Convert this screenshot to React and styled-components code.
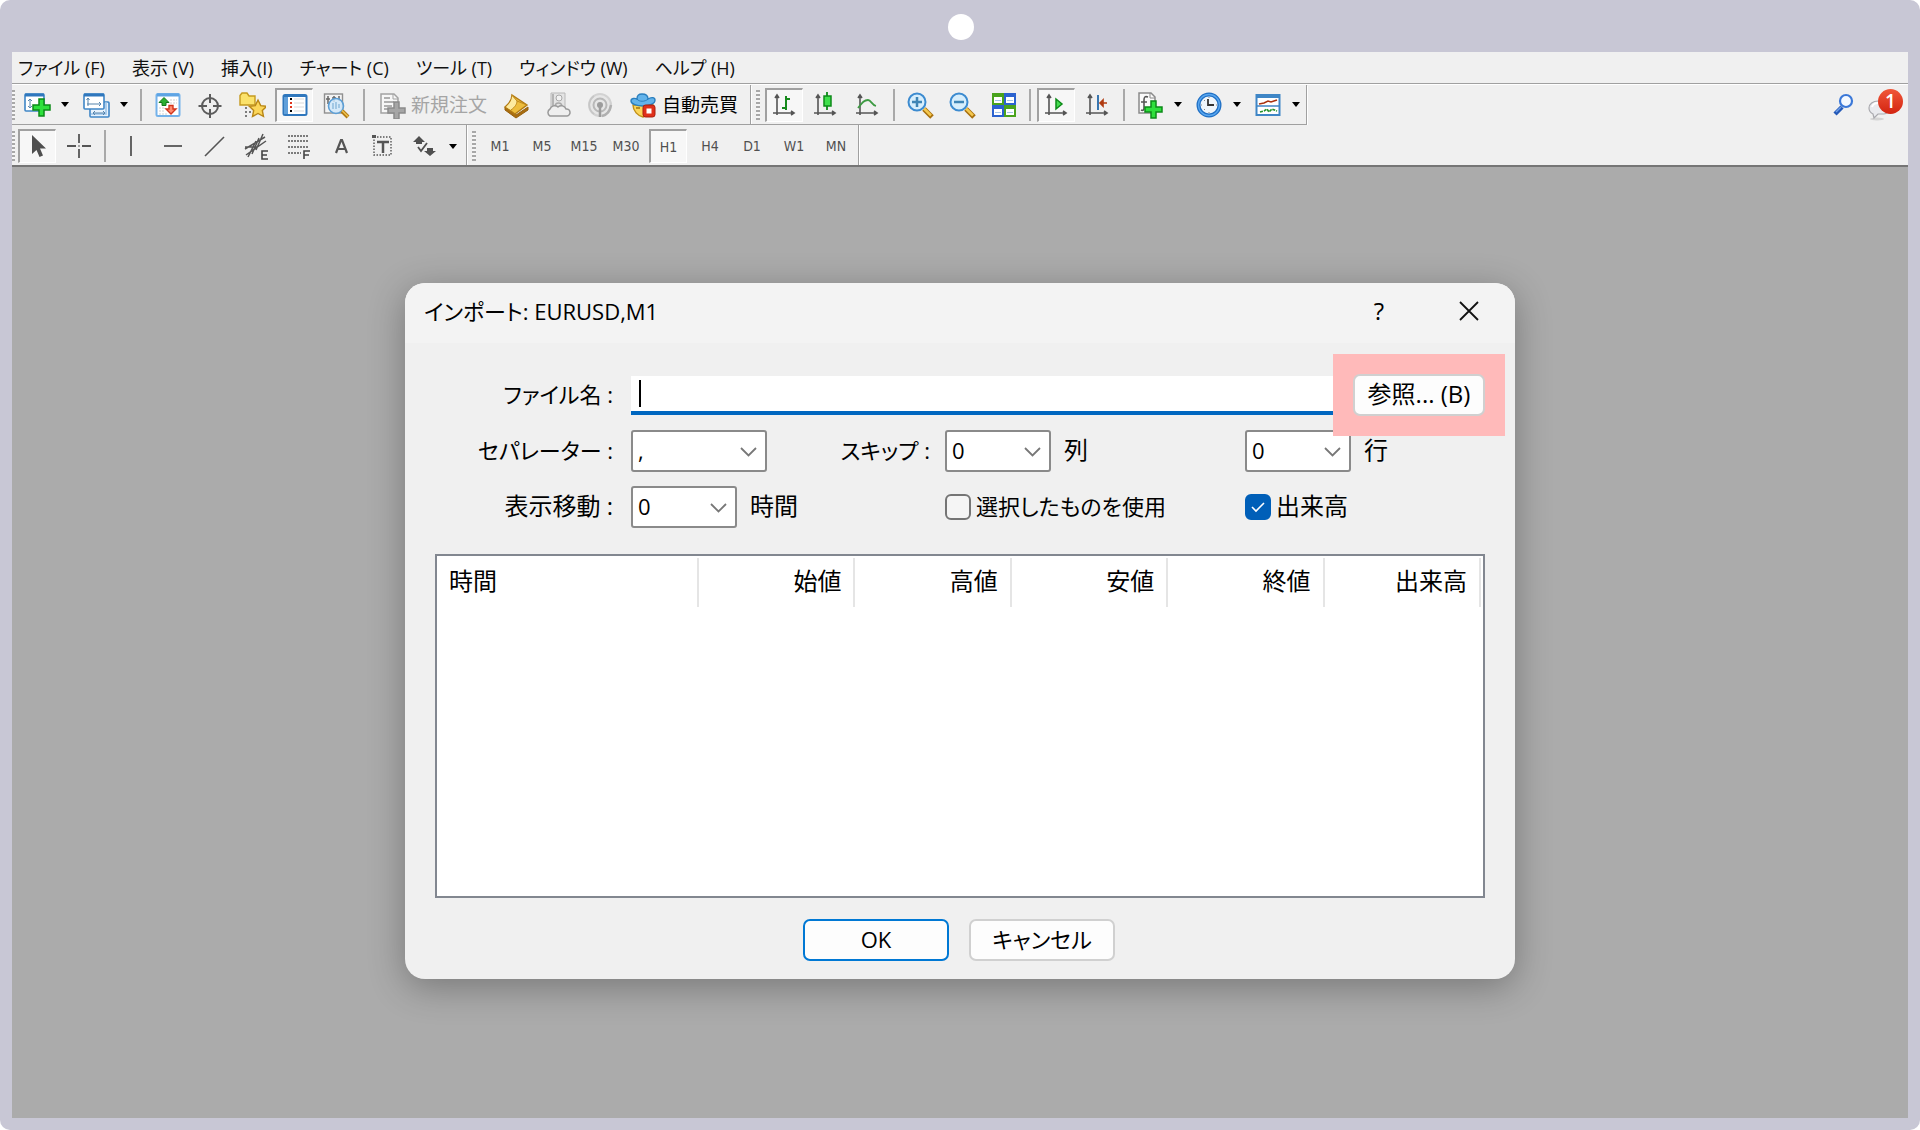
import React from 'react';
import styled, { createGlobalStyle, css } from 'styled-components';

const GlobalStyle = createGlobalStyle`
  * {
    box-sizing: border-box;
  }

  body {
    margin: 0;
    background: #fff;
    color: #000;
    font-family: 'Open Sans', 'Noto Sans CJK JP', sans-serif;
    font-feature-settings: 'palt';
  }

  button, input, select {
    font: inherit;
    font-feature-settings: inherit;
    color: inherit;
  }
`;

const Frame = styled.div`
  display: flex;
  flex-direction: column;
  min-height: 100vh;
  padding: 0 12px 12px;
  background: #c8c7d5;
  border-radius: 10px;
`;

const FrameTop = styled.div`
  display: flex;
  align-items: center;
  justify-content: center;
  height: 52px;
  padding: 2px 0 0 2px;
`;

const Camera = styled.span`
  width: 26px;
  height: 26px;
  border-radius: 50%;
  background: #fff;
`;

const MenuBar = styled.nav`
  display: flex;
  align-items: center;
  gap: 27px;
  height: 32px;
  padding-left: 6px;
  background: #f0f0f0;
  border-bottom: 1px solid #a0a0a0;
`;

const MenuItem = styled.button`
  padding: 0;
  border: none;
  background: none;
  font-size: 18px;
  line-height: 28px;
  color: #111;
  white-space: nowrap;
`;

const Toolbar = styled.div`
  display: flex;
  background: #f0f0f0;
  border-top: 1px solid #fff;
  height: 41px;
`;

const LowerToolbar = styled(Toolbar)`
  height: 42px;
  border-top: none;
  border-bottom: 2px solid #757575;
`;

const Group = styled.div`
  display: flex;
  align-items: center;
  padding-right: ${({ $end }) => $end || 0}px;
  border-right: 1px solid #a0a0a0;
  border-bottom: 1px solid #a0a0a0;
  box-shadow: 1px 1px 0 #fff;

  ${LowerToolbar} & {
    padding-top: 2px;
    border-bottom: none;
    box-shadow: 1px 0 0 #fff;
  }
`;

const Grip = styled.span`
  width: ${({ $edge }) => ($edge ? 3 : 4)}px;
  height: 30px;
  margin: ${({ $edge }) => ($edge ? '0 1px 0 0' : '0 3px 0 5px')};
  background: repeating-linear-gradient(#a8a8a8 0 2px, #f6f6f6 2px 4px);
`;

const Separator = styled.span`
  width: 2px;
  height: 32px;
  margin: 0 ${({ $wide }) => ($wide ? '5px 0 6px' : '4px')};
  background: #a9a9a9;
`;

const ToolButton = styled.button`
  display: flex;
  align-items: center;
  justify-content: center;
  gap: 5px;
  min-width: 38px;
  height: 34px;
  margin: 0 2px;
  padding: 0 ${({ $labelled }) => ($labelled ? 5 : 0)}px;
  border: 1px solid transparent;
  background: none;
  font-size: 19px;
  line-height: 28px;
  white-space: nowrap;
  color: ${({ disabled }) => (disabled ? '#a5a5a5' : '#000')};

  ${({ $pressed }) =>
    $pressed &&
    css`
      border-width: 2px 1px 1px 2px;
      border-color: #a0a0a0 #fff #fff #a0a0a0;
      background: #f7f7f7;
    `}
`;

const DropButton = styled.button`
  display: flex;
  align-items: center;
  width: 17px;
  height: 34px;
  padding: 0 0 0 3px;
  border: none;
  background: none;
`;

const PeriodButton = styled(ToolButton)`
  font-family: 'DejaVu Sans Condensed', 'DejaVu Sans', sans-serif;
  font-size: 14px;
  color: #505050;
`;

const Tray = styled.div`
  display: flex;
  align-items: center;
  gap: 10px;
  margin-left: auto;
  padding-right: 5px;
`;

const TrayButton = styled.button`
  display: flex;
  padding: 0;
  border: none;
  background: none;
`;

const Alert = styled.span`
  position: relative;
  display: flex;
`;

const AlertCount = styled.span`
  position: absolute;
  top: 0;
  right: 0;
  width: 25px;
  height: 25px;
  border-radius: 50%;
  background: linear-gradient(#f0573a, #d32410);
  color: #fff;
  font-size: 19px;
  font-weight: 600;
  line-height: 25px;
  text-align: center;
`;

const Workspace = styled.main`
  flex: 1;
  padding: 116px 20px 20px;
  background: #ababab;
`;

const Dialog = styled.section`
  max-width: 1110px;
  margin: 0 auto;
  border-radius: 20px;
  background: #f0f0f0;
  box-shadow: 0 8px 36px rgba(0, 0, 0, 0.3);
  overflow: hidden;
`;

const DialogHeader = styled.header`
  display: flex;
  align-items: center;
  height: 60px;
  padding: 0 1px 4px 19px;
  background: #f3f3f3;
`;

const DialogTitle = styled.h1`
  flex: 1;
  margin: 0;
  font-size: 22px;
  font-weight: 400;
  line-height: 32px;
`;

const HeaderButton = styled.button`
  display: flex;
  align-items: center;
  justify-content: center;
  width: 90px;
  padding: 0;
  border: none;
  background: none;
  font-size: 24px;
  line-height: 32px;
`;

const DialogBody = styled.form`
  padding: 31px 30px 18px;
  font-size: 24px;
  line-height: 36px;
`;

const Fields = styled.div`
  display: grid;
  grid-template-columns: 196px 314px 300px 1fr;
  row-gap: 14px;
  align-items: center;
`;

const FieldLabel = styled.label`
  padding: 0 18px 2px 0;
  font-size: ${({ $kana }) => ($kana ? 22 : 24)}px;
  text-align: right;
  white-space: nowrap;
`;

const FileField = styled.div`
  display: flex;
  grid-column: 2 / -1;
  align-items: center;
  gap: 18px;
`;

const FileBox = styled.div`
  position: relative;
  display: flex;
  flex: 1;
`;

const FileInput = styled.input`
  width: 100%;
  height: 39px;
  padding: 0 10px;
  border: none;
  border-bottom: 4px solid #0067c0;
  background: #fff;
  outline: none;
`;

const Caret = styled.span`
  position: absolute;
  top: 4px;
  left: 8px;
  width: 2px;
  height: 27px;
  background: #000;
`;

const Highlight = styled.div`
  position: relative;
  z-index: 1;

  &::before {
    content: '';
    position: absolute;
    inset: -20px;
    background: #ffbaba;
  }
`;

const PushButton = styled.button`
  position: relative;
  width: ${({ $wide }) => ($wide ? 146 : 132)}px;
  height: 42px;
  padding: 0 0 2px;
  border: 2px solid ${({ $primary }) => ($primary ? '#0078d4' : '#d0d0d0')};
  border-radius: 7px;
  background: #fdfdfd;
  font-size: ${({ $wide }) => ($wide ? 22 : 24)}px;
  line-height: 36px;
  white-space: nowrap;
`;

const Cell = styled.div`
  display: flex;
  align-items: center;
  gap: 13px;
  white-space: nowrap;
`;

const Unit = styled.span`
  padding-bottom: 2px;
`;

const SkipLabel = styled.label`
  margin-left: auto;
  padding: 0 15px 2px 0;
  font-size: 22px;
`;

const SelectBox = styled.span`
  position: relative;
  display: flex;
  width: ${({ $wide }) => ($wide ? 136 : 106)}px;

  svg {
    position: absolute;
    top: 17px;
    right: 10px;
    pointer-events: none;
  }
`;

const Select = styled.select`
  appearance: none;
  width: 100%;
  height: 42px;
  padding: 0 30px 2px 5px;
  border: 2px solid #8a8a8a;
  border-radius: 3px;
  background: #fff;
  font-size: 22px;
`;

const CheckLabel = styled.label`
  display: flex;
  align-items: center;
  gap: 5px;
  font-size: ${({ $kana }) => ($kana ? 22 : 24)}px;
  white-space: nowrap;
`;

const Checkbox = styled.input`
  appearance: none;
  width: 26px;
  height: 26px;
  margin: 0;
  border: 2px solid #757575;
  border-radius: 6px;
  background: #f5f5f5;

  &:checked {
    border-color: #005fb8;
    background: #005fb8;
  }
`;

const CheckWrap = styled.span`
  position: relative;
  display: flex;

  svg {
    position: absolute;
    inset: 0;
    pointer-events: none;
  }
`;

const TableBox = styled.div`
  min-height: 344px;
  margin-top: 26px;
  padding: 2px 2px 0 0;
  border: 2px solid #828790;
  background: #fff;
`;

const Table = styled.table`
  width: 100%;
  border-collapse: collapse;
  table-layout: fixed;
`;

const HeadCell = styled.th`
  width: ${({ $first }) => ($first ? '261px' : 'auto')};
  height: 49px;
  padding: 0 12px 4px;
  border-right: 2px solid #e5e5e5;
  font-weight: 400;
  text-align: ${({ $first }) => ($first ? 'left' : 'right')};
`;

const Actions = styled.div`
  display: flex;
  justify-content: center;
  gap: 20px;
  margin: 21px 2px 0 0;
`;

const Icon = ({ children, size = 28 }) => (
  <svg width={size} height={size} viewBox="0 0 28 28" fill="none" aria-hidden="true">
    {children}
  </svg>
);

const DownArrow = () => (
  <svg width="8" height="5" viewBox="0 0 8 5" aria-hidden="true">
    <path d="M0 0h8L4 5z" fill="#000" />
  </svg>
);

const GreenPlus = ({ x = 0, y = 0, fill = '#2ee03c', stroke = '#0c8a18' }) => (
  <path
    transform={`translate(${x} ${y})`}
    d="M6 0h5v6h6v5h-6v6h-5v-6h-6v-5h6z"
    fill={fill}
    stroke={stroke}
    strokeWidth="1.5"
  />
);

const Axes = () => (
  <g stroke="#555" strokeWidth="1.6">
    <path d="M6 4v20M2 22h21" />
    <path d="M4 7 6 4l2 3M20 20l3 2-3 2" fill="#555" />
  </g>
);

const NewChartIcon = () => (
  <Icon>
    <rect x="2" y="3" width="19" height="17" rx="1" fill="#fff" stroke="#3f86c6" strokeWidth="1.6" />
    <path d="M2 4h19" stroke="#2f77bd" strokeWidth="3" />
    <path d="M7 8v9M5 10l2-2 2 2M5 15l2 2 2-2M10 15h4" stroke="#5583ab" />
    <GreenPlus x={10} y={8} />
  </Icon>
);

const ProfilesIcon = () => (
  <Icon>
    <rect x="8" y="11" width="19" height="15" rx="1" fill="#e8f3fd" stroke="#3f86c6" strokeWidth="1.6" />
    <path d="M24 11v12H9" stroke="#9cc4e8" strokeWidth="1.6" />
    <path d="M11 22h12M13 20l-2 2 2 2M21 20l2 2-2 2" stroke="#5583ab" />
    <rect x="2" y="3" width="20" height="15" rx="1" fill="#fff" stroke="#3f86c6" strokeWidth="1.6" />
    <path d="M2 4h20" stroke="#2f77bd" strokeWidth="3" />
    <path d="M6 7v8M4.5 9 6 7l1.5 2M5 13h14M17 11l2 2-2 2" stroke="#5583ab" />
  </Icon>
);

const MarketWatchIcon = () => (
  <Icon>
    <rect x="2.5" y="3" width="23" height="22" rx="1.5" fill="#fff" stroke="#74b2ea" strokeWidth="2" />
    <path d="M3 4h22" stroke="#5ea4e4" strokeWidth="3" />
    <path d="M16 9h7M16 12h7M5 17h6M5 20h6M5 23h8" stroke="#cfcfcf" strokeDasharray="2 1" />
    <path d="m10 6.500 5 5h-3v3H8v-3H5z" fill="#2cae32" stroke="#14781b" />
    <path d="m17 23-5-5h3v-3.500h4V18h3z" fill="#ff8a70" stroke="#d2351c" strokeWidth="1.4" />
  </Icon>
);

const CrosshairCircleIcon = () => (
  <Icon>
    <circle cx="14" cy="15" r="8" stroke="#5c5c5c" strokeWidth="2" />
    <path d="M14 3v9M14 18v9M2.500 15H11M17 15h8.500" stroke="#5c5c5c" strokeWidth="2" />
  </Icon>
);

const FolderStarIcon = () => (
  <Icon>
    <path d="M2 4.500 4 2h5l2 3h6v9H2z" fill="#fbe26b" stroke="#c59a1f" strokeWidth="1.4" />
    <path d="M8 16v11M11 21h3" stroke="#555" strokeWidth="1.5" strokeDasharray="2 2" />
    <path
      d="m20 9 2.700 5.600 6 .7-4.400 4.200 1.200 6L20 22.500l-5.500 3 1.200-6-4.400-4.200 6-.7z"
      fill="#fbd65a"
      stroke="#b98716"
      strokeWidth="1.4"
    />
  </Icon>
);

const NavigatorIcon = () => (
  <Icon>
    <rect x="2.5" y="4" width="23" height="20" rx="1.5" fill="#fff" stroke="#2f77bd" strokeWidth="2" />
    <path d="M5 5v18" stroke="#5f9fda" strokeWidth="4" />
    <path d="M3 5h22" stroke="#2f77bd" strokeWidth="2" />
    <path d="M10 7v2M10 19v2" stroke="#000" strokeWidth="2" />
    <path d="M10 11v2M10 15v2" stroke="#e0331c" strokeWidth="2" />
    <path d="M13 8h10M13 12h10M13 16h10M13 20h10" stroke="#d9d9d9" />
  </Icon>
);

const TesterIcon = () => (
  <Icon>
    <rect x="2.5" y="3" width="18" height="19" fill="#f3f3f3" stroke="#8f8f8f" strokeWidth="1.4" />
    <path d="M6 5v8M4 8h4M12 5v6M10 7h4M17 5v5" stroke="#666" strokeWidth="1.5" />
    <circle cx="14" cy="15" r="7.5" fill="#cfe6f9" fillOpacity="0.85" stroke="#5c9fd6" strokeWidth="1.6" />
    <path d="M11 12v6M14 11v7M17 13v4" stroke="#8cb8dc" strokeWidth="1.4" />
    <path d="m20 20 6 6" stroke="#b17a12" strokeWidth="4" />
    <path d="m20 19.500 6 6" stroke="#f0c350" strokeWidth="1.5" />
  </Icon>
);

const NewOrderIcon = () => (
  <Icon>
    <path d="M3 3h13l4 4v15H3z" fill="#f7f7f7" stroke="#a3a3a3" strokeWidth="1.5" />
    <path d="M6 7h6M6 11h10M6 15h8M6 18h6" stroke="#999" strokeWidth="1.5" />
    <path d="M15 3v5h5" stroke="#a3a3a3" />
    <GreenPlus x={10} y={11} fill="#a6a6a6" stroke="#8b8b8b" />
  </Icon>
);

const BookIcon = () => (
  <Icon>
    <path d="m3 16 11 8 12-8v3L14 27 3 19z" fill="#a96d10" stroke="#96600d" />
    <path d="m3 16 10 7 12-9L10 4c0 5-3 9-7 12z" fill="#edbd3d" stroke="#b17a12" strokeWidth="1.4" />
    <path d="M10 5c0 5-3 8-6 11l5 3c4-3 6-6 6-9z" fill="#fdeaa0" />
    <path d="m10 4 5 6 10 4M15 10c0 3-2 6-6 9" stroke="#c08a1c" />
  </Icon>
);

const CloudServerIcon = () => (
  <Icon>
    <path d="M7 2h14v15H7z" fill="#e4e4e4" stroke="#b8b8b8" />
    <path d="M9 3v13M12 8h6M11 16c0-3 1-4 3.500-4s3.500 1 3.500 4" stroke="#a8a8a8" strokeWidth="1.6" />
    <circle cx="15" cy="7" r="3" fill="#f2f2f2" stroke="#a8a8a8" />
    <path
      d="M6 25a4 4 0 0 1 0-7 5 5 0 0 1 8-2 5 5 0 0 1 8 2 3.500 3.500 0 0 1 1 7z"
      fill="#efefef"
      stroke="#999"
      strokeWidth="1.5"
    />
  </Icon>
);

const SignalIcon = () => (
  <Icon>
    <circle cx="14" cy="14" r="11" fill="#e6e6e6" stroke="#d2d2d2" strokeWidth="2" />
    <path d="M8 23a11 11 0 0 1 0-18" stroke="#c6c6c6" strokeWidth="1.6" />
    <circle cx="14" cy="14" r="6.5" stroke="#b8b8b8" strokeWidth="2" />
    <circle cx="14" cy="14" r="3" fill="#9c9c9c" />
    <path d="M14 15v11" stroke="#9c9c9c" strokeWidth="2.5" />
    <path d="M16 25c5-1 8-5 9-11" stroke="#b0b0b0" strokeWidth="2.5" />
  </Icon>
);

const AutoTradeIcon = () => (
  <Icon>
    <path d="M4 14c0 6 5 11 10 12 5-1 10-6 10-12z" fill="#fbd65a" stroke="#c18f17" strokeWidth="1.4" />
    <path d="M7 17h4M15 17h4" stroke="#a3760f" strokeWidth="1.5" />
    <path
      d="M2 10c0-3 4-3 6-2 0-4 2-5 5-5 4 0 6 1 6 5 3-2 7-2 7 1 0 4-6 6-12 6S2 13 2 10z"
      fill="#63b3ea"
      stroke="#2b7fbe"
      strokeWidth="1.4"
    />
    <path d="M8 8c2 3 8 3 11 0" stroke="#2b7fbe" />
    <rect x="14" y="14" width="12" height="12" rx="2.5" fill="#e0301a" stroke="#a91e0d" />
    <rect x="17.5" y="17.5" width="5" height="5" fill="#fff" />
  </Icon>
);

const BarChartIcon = () => (
  <Icon>
    <Axes />
    <path d="M15 5v14M11 17h4M15 8h4" stroke="#178a1d" strokeWidth="2" />
  </Icon>
);

const CandleIcon = () => (
  <Icon>
    <Axes />
    <path d="M15 1v18" stroke="#0c8a18" strokeWidth="1.8" />
    <rect x="12" y="5" width="7" height="10" fill="#3fe04b" stroke="#0c8a18" strokeWidth="1.5" />
  </Icon>
);

const LineChartIcon = () => (
  <Icon>
    <Axes />
    <path d="M4 17c4-5 6-8 10-8 3 0 4 5 8 6" stroke="#3d9a42" strokeWidth="1.8" />
  </Icon>
);

const ZoomIcon = ({ plus }) => (
  <Icon>
    <path d="m18 18 8 8" stroke="#a86f0d" strokeWidth="5" />
    <path d="m18 17.500 7 7" stroke="#f4c84f" strokeWidth="2.5" />
    <circle cx="11" cy="11" r="8.5" fill="#d7eefc" stroke="#3c8bd0" strokeWidth="2" />
    <path d={plus ? 'M6 11h10M11 6v10' : 'M6 11h10'} stroke="#3f85b5" strokeWidth="2.5" />
  </Icon>
);

const TileIcon = () => (
  <Icon>
    <rect x="2" y="2" width="12" height="12" fill="#4aa31c" />
    <rect x="14" y="2" width="12" height="12" fill="#2b62cf" />
    <rect x="2" y="14" width="12" height="12" fill="#2b62cf" />
    <rect x="14" y="14" width="12" height="12" fill="#4aa31c" />
    <path d="M4 6h8v6H4zM16 6h8v6h-8zM4 18h8v6H4zM16 18h8v6h-8z" fill="#fff" />
    <path d="M5 9.500h6M5 21.500h6M17 9.500h6M17 21.500h6" stroke="#a6c6e8" />
  </Icon>
);

const AutoScrollIcon = () => (
  <Icon>
    <Axes />
    <path d="M13 8v10l6-5z" fill="#45dd50" stroke="#0c8a18" strokeWidth="1.5" />
  </Icon>
);

const ChartShiftIcon = () => (
  <Icon>
    <Axes />
    <path d="M14 4v15" stroke="#2368a8" strokeWidth="1.8" />
    <path d="M23 12h-6M19 9l-3 3 3 3z" fill="#c2410c" stroke="#b03a10" strokeWidth="1.6" />
  </Icon>
);

const IndicatorIcon = () => (
  <Icon>
    <path d="M3 2h12l4 4v16H3z" fill="#fafafa" stroke="#8a8a8a" strokeWidth="1.5" />
    <path d="M14 2v5h5" stroke="#8a8a8a" />
    <path d="M12 6c-3-1-4 0-4 3v8c0 2-1 3-3 2M5 11h6" stroke="#555" strokeWidth="1.6" />
    <GreenPlus x={9} y={10} />
  </Icon>
);

const ClockIcon = () => (
  <Icon>
    <circle cx="14" cy="14" r="10.5" fill="#eef5fb" stroke="#1f6fc4" strokeWidth="4" />
    <circle cx="14" cy="14" r="10.5" stroke="#58a6ef" strokeWidth="1.4" />
    <path d="M13 8v6h6" stroke="#333" strokeWidth="1.8" />
    <path d="M14 6v1M14 21v1M6 14h1M21 14h1M9 9l1 1M9 19l1-1" stroke="#888" />
  </Icon>
);

const TemplateIcon = () => (
  <Icon>
    <rect x="2.5" y="4" width="23" height="20" fill="#fff" stroke="#3f86c6" strokeWidth="2" />
    <path d="M2 5h24" stroke="#3f86c6" strokeWidth="4" />
    <path d="M3 15h22" stroke="#3f86c6" strokeWidth="1.5" />
    <path d="m5 13 5-1 4-2 3 1 6-2" stroke="#a8320f" strokeWidth="1.6" />
    <path d="m6 21 4-1 3-2 2 3 3-3 5 2" stroke="#23922a" strokeWidth="1.6" strokeDasharray="3 1" />
  </Icon>
);

const CursorIcon = () => (
  <Icon>
    <path d="M8 2v19l4.500-4 3 7 3.500-1.500-3-7h6z" fill="#4f4f4f" />
  </Icon>
);

const CrossIcon = () => (
  <Icon>
    <path d="M14 2v9M14 17v9M2 14h9M17 14h9M13.500 14h1" stroke="#555" strokeWidth="1.8" />
  </Icon>
);

const VLineIcon = () => (
  <Icon>
    <path d="M14 4v20" stroke="#555" strokeWidth="1.8" />
  </Icon>
);

const HLineIcon = () => (
  <Icon>
    <path d="M5 14h18" stroke="#555" strokeWidth="1.8" />
  </Icon>
);

const TrendIcon = () => (
  <Icon>
    <path d="M4 24 23 5" stroke="#555" strokeWidth="1.6" />
  </Icon>
);

const ChannelIcon = () => (
  <Icon>
    <path d="M2 17 22 5M3 23 23 9M5 25l8-16M9 22l7-16M13 18l7-16M2 15h12" stroke="#555" strokeWidth="1.5" />
    <path d="M25 19h-6v8h6M19 23h5" stroke="#444" strokeWidth="1.6" />
  </Icon>
);

const FiboIcon = () => (
  <Icon>
    <path d="M3 4h21M3 9h21M3 15h21M3 21h13" stroke="#555" strokeWidth="1.6" strokeDasharray="2 1" />
    <path d="M19 27v-8h6M19 23h5" stroke="#444" strokeWidth="1.6" />
  </Icon>
);

const TextIcon = () => (
  <Icon>
    <path d="m9 21 5-13h1l5 13M11 17h7" stroke="#555" strokeWidth="2.2" />
  </Icon>
);

const TextLabelIcon = () => (
  <Icon>
    <rect x="5" y="5" width="17" height="18" stroke="#555" strokeWidth="1.4" strokeDasharray="1.5 1.5" />
    <path d="M3 3h4v3H3z" fill="#555" />
    <path d="M8 10h12M14 10v11" stroke="#555" strokeWidth="2.5" />
  </Icon>
);

const ArrowsIcon = () => (
  <Icon>
    <path d="m8 4 6 6h-3v2H5v-2H2zM19 24l-6-5h3v-3h6v3h3z" fill="#505050" />
    <path d="m7 15 3 4 6-8" stroke="#505050" strokeWidth="1.8" />
  </Icon>
);

const SearchIcon = () => (
  <Icon>
    <path d="m5 23 7-7" stroke="#2459b8" strokeWidth="4.5" />
    <path d="m6 21 5-5" stroke="#6f9fe8" strokeWidth="1.5" />
    <circle cx="16" cy="10" r="6" fill="#f5f9ff" stroke="#3b78d8" strokeWidth="2.2" />
  </Icon>
);

const ChatIcon = () => (
  <svg width="35" height="32" viewBox="0 0 35 32" fill="none" aria-hidden="true">
    <ellipse cx="9" cy="30" rx="7" ry="1.5" fill="#d4d4d4" />
    <path
      d="M10 12c-5 0-9 3-9 7s2 5 4 6l1 4 4-4h6c3 0 5-3 5-6 0-5-5-7-11-7z"
      fill="#e9eaee"
      stroke="#a9a9ae"
      strokeWidth="1.2"
    />
    <path d="M4 18c1-3 3-4 6-4" stroke="#fff" strokeWidth="2" />
  </svg>
);

const CloseIcon = () => (
  <svg width="20" height="20" viewBox="0 0 20 20" aria-hidden="true">
    <path d="m1 1 18 18M19 1 1 19" stroke="#111" strokeWidth="1.8" />
  </svg>
);

const menus = [
  'ファイル (F)',
  '表示 (V)',
  '挿入(I)',
  'チャート (C)',
  'ツール (T)',
  'ウィンドウ (W)',
  'ヘルプ (H)',
];

const periods = ['M1', 'M5', 'M15', 'M30', 'H1', 'H4', 'D1', 'W1', 'MN'];

const columns = ['時間', '始値', '高値', '安値', '終値', '出来高'];

const Tool = ({ label, icon, pressed }) => (
  <ToolButton type="button" aria-label={label} $pressed={pressed}>
    {icon}
  </ToolButton>
);

const Drop = ({ label }) => (
  <DropButton type="button" aria-label={label}>
    <DownArrow />
  </DropButton>
);

const Combo = ({ id, value, wide, label }) => (
  <SelectBox $wide={wide}>
    <Select id={id} defaultValue={value} aria-label={label}>
      <option value={value}>{value}</option>
    </Select>
    <svg width="17" height="10" viewBox="0 0 17 10" fill="none" aria-hidden="true">
      <path d="m1 1 7.500 7.500L16 1" stroke="#777" strokeWidth="1.8" />
    </svg>
  </SelectBox>
);

const Check = ({ label, checked, kana }) => (
  <CheckLabel $kana={kana}>
    <CheckWrap>
      <Checkbox type="checkbox" defaultChecked={checked} />
      {checked && (
        <svg width="26" height="26" viewBox="0 0 26 26" fill="none" aria-hidden="true">
          <path d="m7 13 4 4 8-8" stroke="#fff" strokeWidth="1.6" />
        </svg>
      )}
    </CheckWrap>
    <Unit>{label}</Unit>
  </CheckLabel>
);

const MainToolbar = () => (
  <Toolbar>
    <Group $end={4}>
      <Grip $edge />
      <Tool label="新規チャート" icon={<NewChartIcon />} />
      <Drop label="新規チャート一覧" />
      <Tool label="組表示" icon={<ProfilesIcon />} />
      <Drop label="組表示一覧" />
      <Separator $wide />
      <Tool label="気配値" icon={<MarketWatchIcon />} />
      <Tool label="データウィンドウ" icon={<CrosshairCircleIcon />} />
      <Tool label="ナビゲーター" icon={<FolderStarIcon />} />
      <Tool label="ターミナル" icon={<NavigatorIcon />} pressed />
      <Tool label="ストラテジーテスター" icon={<TesterIcon />} />
      <Separator $wide />
      <ToolButton type="button" disabled $labelled>
        <NewOrderIcon />
        新規注文
      </ToolButton>
      <Tool label="メタエディター" icon={<BookIcon />} />
      <Tool label="サーバー" icon={<CloudServerIcon />} />
      <Tool label="シグナル" icon={<SignalIcon />} />
      <ToolButton type="button" $labelled>
        <AutoTradeIcon />
        自動売買
      </ToolButton>
    </Group>
    <Group>
      <Grip />
      <Tool label="バーチャート" icon={<BarChartIcon />} pressed />
      <Tool label="ローソク足" icon={<CandleIcon />} />
      <Tool label="ラインチャート" icon={<LineChartIcon />} />
      <Separator />
      <Tool label="拡大" icon={<ZoomIcon plus />} />
      <Tool label="縮小" icon={<ZoomIcon />} />
      <Tool label="整列" icon={<TileIcon />} />
      <Separator />
      <Tool label="自動スクロール" icon={<AutoScrollIcon />} pressed />
      <Tool label="チャートシフト" icon={<ChartShiftIcon />} />
      <Separator />
      <Tool label="インディケータ" icon={<IndicatorIcon />} />
      <Drop label="インディケータ一覧" />
      <Tool label="時間足" icon={<ClockIcon />} />
      <Drop label="時間足一覧" />
      <Tool label="定型チャート" icon={<TemplateIcon />} />
      <Drop label="定型チャート一覧" />
    </Group>
    <Tray>
      <TrayButton type="button" aria-label="検索">
        <SearchIcon />
      </TrayButton>
      <TrayButton type="button" aria-label="通知">
        <Alert>
          <ChatIcon />
          <AlertCount>1</AlertCount>
        </Alert>
      </TrayButton>
    </Tray>
  </Toolbar>
);

const DrawingToolbar = () => (
  <LowerToolbar>
    <Group $end={3}>
      <Grip $edge />
      <Tool label="カーソル" icon={<CursorIcon />} pressed />
      <Tool label="クロスヘア" icon={<CrossIcon />} />
      <Separator />
      <Tool label="垂直線" icon={<VLineIcon />} />
      <Tool label="水平線" icon={<HLineIcon />} />
      <Tool label="トレンドライン" icon={<TrendIcon />} />
      <Tool label="チャネル" icon={<ChannelIcon />} />
      <Tool label="フィボナッチ" icon={<FiboIcon />} />
      <Tool label="テキスト" icon={<TextIcon />} />
      <Tool label="テキストラベル" icon={<TextLabelIcon />} />
      <Tool label="矢印" icon={<ArrowsIcon />} />
      <Drop label="矢印一覧" />
    </Group>
    <Group $end={1}>
      <Grip />
      {periods.map((period) => (
        <PeriodButton key={period} type="button" $pressed={period === 'H1'}>
          {period}
        </PeriodButton>
      ))}
    </Group>
  </LowerToolbar>
);

const ImportDialog = () => (
  <Dialog role="dialog" aria-labelledby="import-title">
    <DialogHeader>
      <DialogTitle id="import-title">インポート: EURUSD,M1</DialogTitle>
      <HeaderButton type="button">?</HeaderButton>
      <HeaderButton type="button" aria-label="閉じる">
        <CloseIcon />
      </HeaderButton>
    </DialogHeader>
    <DialogBody onSubmit={(e) => e.preventDefault()}>
      <Fields>
        <FieldLabel htmlFor="file-name" $kana>
          ファイル名 :
        </FieldLabel>
        <FileField>
          <FileBox>
            <FileInput id="file-name" type="text" />
            <Caret />
          </FileBox>
          <Highlight>
            <PushButton type="button">参照... (B)</PushButton>
          </Highlight>
        </FileField>

        <FieldLabel htmlFor="separator" $kana>
          セパレーター :
        </FieldLabel>
        <Cell>
          <Combo id="separator" value="," wide />
          <SkipLabel htmlFor="skip-columns">スキップ :</SkipLabel>
        </Cell>
        <Cell>
          <Combo id="skip-columns" value="0" />
          <Unit>列</Unit>
        </Cell>
        <Cell>
          <Combo id="skip-rows" value="0" label="行" />
          <Unit>行</Unit>
        </Cell>

        <FieldLabel htmlFor="shift">表示移動 :</FieldLabel>
        <Cell>
          <Combo id="shift" value="0" />
          <Unit>時間</Unit>
        </Cell>
        <Check label="選択したものを使用" kana />
        <Check label="出来高" checked />
      </Fields>

      <TableBox>
        <Table>
          <thead>
            <tr>
              {columns.map((name, i) => (
                <HeadCell key={name} scope="col" $first={i === 0}>
                  {name}
                </HeadCell>
              ))}
            </tr>
          </thead>
        </Table>
      </TableBox>

      <Actions>
        <PushButton type="submit" $wide $primary>
          OK
        </PushButton>
        <PushButton type="button" $wide>
          キャンセル
        </PushButton>
      </Actions>
    </DialogBody>
  </Dialog>
);

const App = () => (
  <>
    <GlobalStyle />
    <Frame>
      <FrameTop>
        <Camera />
      </FrameTop>
      <MenuBar>
        {menus.map((menu) => (
          <MenuItem key={menu} type="button">
            {menu}
          </MenuItem>
        ))}
      </MenuBar>
      <MainToolbar />
      <DrawingToolbar />
      <Workspace>
        <ImportDialog />
      </Workspace>
    </Frame>
  </>
);

export default App;
